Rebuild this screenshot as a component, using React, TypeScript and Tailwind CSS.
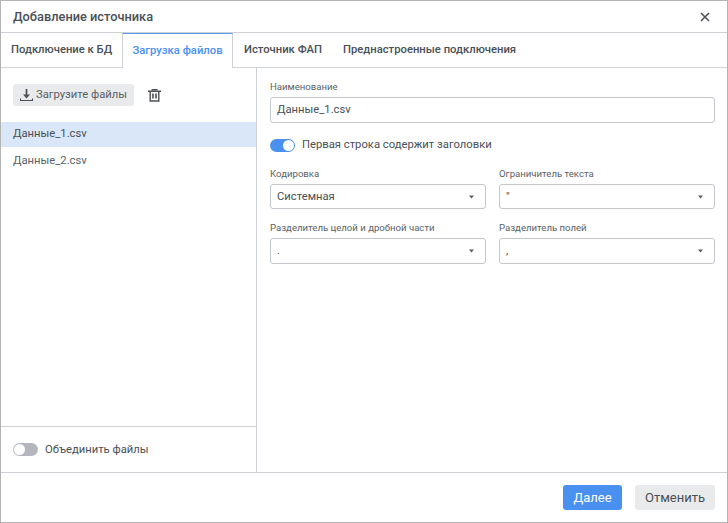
import React from "react";

function Caret() {
  return (
    <svg width="5" height="4" viewBox="0 0 5 4" className="shrink-0">
      <path d="M0 0.5h5L2.5 3.5z" fill="#555b63" />
    </svg>
  );
}

function Select({ label, value, tall }: { label: string; value: string; tall?: boolean }) {
  return (
    <div className="flex flex-col">
      <div className="text-[9.6px] leading-[14px] text-[#5a5f66] h-[12px] mb-[5px]">{label}</div>
      <div
        className={`${tall ? "h-[26px]" : "h-[25px]"} border border-[#c4c7cb] rounded-[3px] flex items-center pl-[6px] pr-[11px] justify-between text-[11.25px] text-[#4a4f55] antialiased`}
      >
        <span className="pt-[1px]">{value}</span>
        <Caret />
      </div>
    </div>
  );
}

function Toggle({ on }: { on: boolean }) {
  return (
    <div
      className={`w-[25px] h-[13px] rounded-full relative shrink-0 ${on ? "bg-[#4a90f0]" : "bg-[#b3b6bc]"}`}
    >
      <div
        className={`absolute top-[1px] w-[11px] h-[11px] rounded-full bg-white ${on ? "right-[1px]" : "left-[1px]"}`}
      />
    </div>
  );
}

export default function App() {
  return (
    <div
      className="w-[728px] h-[523px] bg-white border border-[#b4b4b4] flex flex-col overflow-hidden text-[#4a4f55]"
      style={{ fontFamily: "Roboto, sans-serif" }}
    >
      <div className="h-[32px] shrink-0 flex items-center justify-between pl-[12px] pr-[17px] border-b border-[#cdd0d4]">
        <span className="text-[12.8px] font-medium text-[#4a4f55]">Добавление источника</span>
        <svg width="10" height="10" viewBox="0 0 10 10">
          <path d="M1 1l8 8M9 1l-8 8" stroke="#4f545a" strokeWidth="1.6" fill="none" />
        </svg>
      </div>

      <div className="h-[35px] shrink-0 flex border-b border-[#cdd0d4] text-[11.25px] font-medium text-[#4a4f55]">
        <div className="w-[121px] pl-[10px] flex items-center">Подключение к БД</div>
        <div className="w-[111px] h-[35px] shrink-0 relative flex items-center justify-center bg-white border-x border-[#cdd0d4] border-t border-t-[#5a9bef] text-[#4a90f0]">
          Загрузка файлов
        </div>
        <div className="pl-[11px] flex items-center w-[110px] shrink-0">Источник ФАП</div>
        <div className="flex items-center">Преднастроенные подключения</div>
      </div>

      <div className="flex-1 flex min-h-0">
        <div className="w-[256px] shrink-0 border-r border-[#cdd0d4] flex flex-col">
          <div className="h-[54px] shrink-0 flex items-center pl-[12px]">
            <div className="w-[121px] h-[22px] bg-[#e9eaec] rounded-[3px] flex items-center pl-[7px] gap-[3px] text-[11.25px] text-[#5a5f66]">
              <svg width="13" height="14" viewBox="0 0 13 14" className="shrink-0">
                <path d="M6.5 1v7" stroke="#4a4f55" strokeWidth="1.7" fill="none" />
                <path d="M3 6.5h7L6.5 10.5z" fill="#4a4f55" />
                <path d="M0.5 10.5v2h12v-2" stroke="#4a4f55" strokeWidth="1.1" fill="none" />
              </svg>
              <span>Загрузите файлы</span>
            </div>
            <svg width="13" height="14" viewBox="0 0 13 14" className="ml-[14px] shrink-0">
              <path d="M3.5 1h6v1.5h-6z" fill="#4a4f55" />
              <path d="M0 2.5h13V4H0z" fill="#4a4f55" />
              <path d="M2.2 4v9h8.6V4" stroke="#4a4f55" strokeWidth="1.4" fill="none" />
              <path d="M5 5.5v5M8 5.5v5" stroke="#4a4f55" strokeWidth="1.6" fill="none" />
            </svg>
          </div>
          <div className="h-[25px] bg-[#d9e7f8] pl-[12px] flex items-center text-[11.25px] text-[#4a4f55]">
            Данные_1.csv
          </div>
          <div className="h-[27px] pl-[12px] pt-[1px] flex items-center text-[11.25px] text-[#5a5f66]">
            Данные_2.csv
          </div>
          <div className="flex-1" />
          <div className="h-[46px] shrink-0 border-t border-[#cdd0d4] flex items-center pl-[12px] gap-[7px] text-[11.25px] text-[#4a4f55]">
            <Toggle on={false} />
            <span className="pt-[1px]">Объединить файлы</span>
          </div>
        </div>

        <div className="flex-1 pl-[13px] pr-[12px] pt-[12px] min-w-0">
          <div className="text-[9.6px] leading-[14px] h-[12px] text-[#5a5f66] mb-[5px]">Наименование</div>
          <div className="h-[26px] border border-[#c4c7cb] rounded-[3px] flex items-center pl-[6px] pt-[1px] text-[11.25px] text-[#4a4f55]">
            Данные_1.csv
          </div>
          <div className="flex items-center gap-[7px] mt-[15px] h-[14px] text-[11.25px] text-[#4a4f55]">
            <Toggle on={true} />
            <span className="pt-[1px]">Первая строка содержит заголовки</span>
          </div>
          <div className="grid grid-cols-[216px_216px] gap-x-[13px] gap-y-[12px] mt-[15px]">
            <Select label="Кодировка" value="Системная" />
            <Select label="Ограничитель текста" value={'"'} />
            <Select label="Разделитель целой и дробной части" value="." tall />
            <Select label="Разделитель полей" value="," tall />
          </div>
        </div>
      </div>

      <div className="h-[50px] shrink-0 border-t border-[#cdd0d4] flex items-center justify-end pr-[12px] gap-[13px] text-[13px]">
        <div className="w-[59px] h-[25px] bg-[#4a90f0] rounded-[3px] flex items-center justify-center text-white">
          Далее
        </div>
        <div className="w-[80px] h-[25px] bg-[#e9eaec] rounded-[3px] flex items-center justify-center text-[#4a4f55]">
          Отменить
        </div>
      </div>
    </div>
  );
}
